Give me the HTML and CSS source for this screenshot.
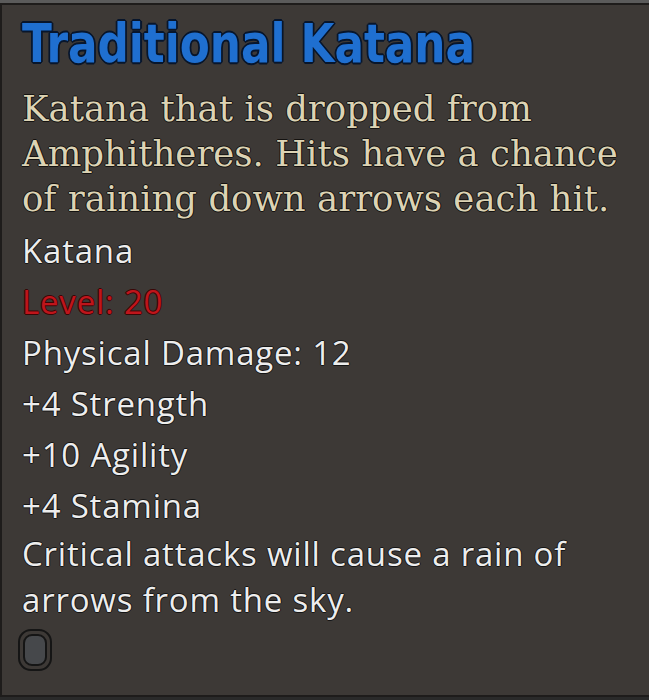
FILE: index.html
```html
<html>
<head>
<link rel="stylesheet" href="styles.css">
</head>
<body>
<div class="tooltip">
  <h1 class="name">Traditional Katana</h1>
  <p class="lore">Katana that is dropped from Amphitheres. Hits have a chance of raining down arrows each hit.</p>
  <ul class="stats">
    <li>Katana</li>
    <li class="req">Level: 20</li>
    <li>Physical Damage: 12</li>
    <li>+4 Strength</li>
    <li>+10 Agility</li>
    <li>+4 Stamina</li>
  </ul>
  <p class="effect">Critical attacks will cause a rain of arrows from the sky.</p>
  <div class="socket"><span></span></div>
</div>
</body>
</html>
```

FILE: styles.css
```css
html, body {margin:0; padding:0; background:#2a2a2a; height:700px; overflow:hidden;}
body {border-top:3px solid #5b5b5b;}

.tooltip {
  box-sizing:border-box;
  height:694px;
  background:#3d3936;
  border:2px solid #1e1c1b;
  border-right:none;
  padding:11px 20px 0 20px;
}

.name {
  display:inline-block;
  margin:0;
  font-family:"DejaVu Sans Condensed", sans-serif;
  font-weight:bold;
  font-size:54px;
  line-height:56px;
  color:#1f6fd0;
  transform:scaleX(0.9);
  transform-origin:left center;
  text-shadow:-2px 0 #08162c, 2px 0 #08162c, 0 -2px #08162c, 0 2px #08162c,
    -1px -1px #08162c, 1px 1px #08162c, -1px 1px #08162c, 1px -1px #08162c;
}

.lore {
  margin:14px 0 0 0;
  width:612px;
  font-family:"DejaVu Serif", serif;
  font-size:35.5px;
  line-height:45px;
  color:#dcd3b4;
  text-shadow:-1px 0 #141210, 1px 0 #141210, 0 -1px #141210, 0 1px #141210;
}

.stats {list-style:none; margin:4px 0 0 0; padding:0;}
.stats li, .effect {
  font-family:"Open Sans", sans-serif;
  font-size:33px;
  letter-spacing:0.8px;
  line-height:51px;
  color:#ededed;
  text-shadow:-1px 0 #151515, 1px 0 #151515, 0 -1px #151515, 0 1px #151515;
}
.stats .req {
  color:#bf151b;
  text-shadow:-1px 0 #3a0606, 1px 0 #3a0606, 0 -1px #3a0606, 0 1px #3a0606;
}
.effect {margin:0; line-height:46px; width:590px;}

.socket {
  margin:6px 0 0 -4px;
  width:34px; height:42px;
  box-sizing:border-box;
  border:2px solid #151515;
  border-radius:13px;
  padding:3px;
}
.socket span {
  display:block; height:100%;
  box-sizing:border-box;
  border:2px solid #151515;
  border-radius:9px;
  background:#46484b;
}
```
